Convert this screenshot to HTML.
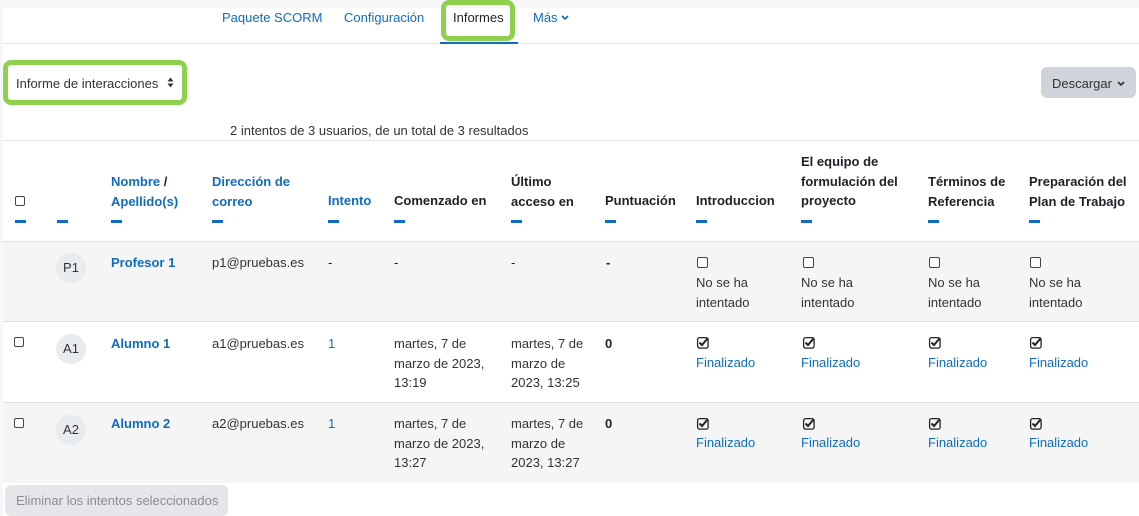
<!DOCTYPE html>
<html><head><meta charset="utf-8"><style>
*{box-sizing:border-box;margin:0;padding:0}
body{width:1139px;height:516px;overflow:hidden;background:#fff;font-family:"Liberation Sans",sans-serif;font-size:13px;color:#1d2125;position:relative}
.a{position:absolute;white-space:nowrap;line-height:19.5px}
.l{color:#0f6cbf}
.b{font-weight:bold}
.dash{position:absolute;width:11px;height:3px;background:#0f6cbf}
.cb{position:absolute;width:10px;height:10px;border:1.3px solid #444;border-radius:2px;background:#fff}
.av{position:absolute;width:30px;height:30px;border-radius:50%;background:#e9ecef;font-size:13px;color:#333;text-align:center;line-height:30px}
.g{color:#333}
</style></head><body>
<div style="position:absolute;left:0;top:0;width:1139px;height:8px;background:#f7f7f7"></div>
<div style="position:absolute;left:0;top:0;width:3px;height:516px;background:#f7f7f7"></div>
<div style="position:absolute;left:3px;top:43px;width:1136px;height:1px;background:#dee2e6"></div>
<div class="a l" style="left:222px;top:8px">Paquete SCORM</div>
<div class="a l" style="left:344px;top:8px">Configuración</div>
<div class="a" style="left:453px;top:8px">Informes</div>
<div class="a l" style="left:533px;top:8px">Más</div>
<svg style="position:absolute;left:561px;top:15px" width="8" height="6"><path d="M1 1 L4 4 L7 1" fill="none" stroke="#0f6cbf" stroke-width="1.6"/></svg>
<div style="position:absolute;left:440px;top:42px;width:78px;height:2px;background:#0f6cbf"></div>
<div style="position:absolute;left:441px;top:0px;width:74px;height:41px;border:5px solid #8fd14f;border-radius:8px"></div>

<div style="position:absolute;left:3px;top:60px;width:184px;height:45px;border:5px solid #8fd14f;border-radius:8px;background:#fff"></div>
<div class="a" style="left:16px;top:74px;color:#333">Informe de interacciones</div>
<svg style="position:absolute;left:167px;top:77px" width="7" height="11"><path d="M0.5 4.5 L3.5 0.5 L6.5 4.5Z M0.5 6.5 L3.5 10.5 L6.5 6.5Z" fill="#333"/></svg>
<div style="position:absolute;left:1041px;top:67px;width:95px;height:31px;background:#ced4da;border-radius:6px"></div>
<div class="a" style="left:1052px;top:74px;color:#333">Descargar</div>
<svg style="position:absolute;left:1117px;top:81px" width="8" height="6"><path d="M1 1 L4 4 L7 1" fill="none" stroke="#333" stroke-width="1.6"/></svg>

<div class="a" style="left:230px;top:121px;color:#333">2 intentos de 3 usuarios, de un total de 3 resultados</div>
<div style="position:absolute;left:3px;top:140px;width:1136px;height:1px;background:#dee2e6"></div>

<div style="position:absolute;left:3px;top:241px;width:1136px;height:80px;background:#f5f5f5;border-top:1px solid #dee2e6"></div>
<div style="position:absolute;left:3px;top:321px;width:1136px;height:81px;background:#fff;border-top:1px solid #dee2e6"></div>
<div style="position:absolute;left:3px;top:402px;width:1136px;height:81px;background:#f5f5f5;border-top:1px solid #dee2e6"></div>

<div class="cb" style="left:15px;top:196px"></div>
<div class="dash" style="left:15px;top:220px"></div>
<div class="dash" style="left:57px;top:220px"></div>
<div class="a l b" style="left:111px;top:172px">Nombre <span style="color:#1d2125">/</span><br>Apellido(s)</div>
<div class="dash" style="left:111px;top:220px"></div>
<div class="a l b" style="left:212px;top:172px">Dirección de<br>correo</div>
<div class="dash" style="left:212px;top:220px"></div>
<div class="a l b" style="left:328px;top:191px">Intento</div>
<div class="dash" style="left:328px;top:220px"></div>
<div class="a b" style="left:394px;top:191px">Comenzado en</div>
<div class="dash" style="left:394px;top:220px"></div>
<div class="a b" style="left:511px;top:172px">Último<br>acceso en</div>
<div class="dash" style="left:511px;top:220px"></div>
<div class="a b" style="left:605px;top:191px">Puntuación</div>
<div class="dash" style="left:605px;top:220px"></div>
<div class="a b" style="left:696px;top:191px">Introduccion</div>
<div class="dash" style="left:696px;top:220px"></div>
<div class="a b" style="left:801px;top:152px">El equipo de<br>formulación del<br>proyecto</div>
<div class="dash" style="left:801px;top:220px"></div>
<div class="a b" style="left:928px;top:172px">Términos de<br>Referencia</div>
<div class="dash" style="left:928px;top:220px"></div>
<div class="a b" style="left:1029px;top:172px">Preparación del<br>Plan de Trabajo</div>
<div class="dash" style="left:1029px;top:220px"></div>

<div class="av" style="left:56px;top:253px">P1</div>
<div class="a l b" style="left:111px;top:253px">Profesor 1</div>
<div class="a g" style="left:212px;top:253px">p1@pruebas.es</div>
<div class="a" style="left:328px;top:253px">-</div>
<div class="a" style="left:394px;top:253px">-</div>
<div class="a" style="left:511px;top:253px">-</div>
<div class="a b" style="left:606px;top:253px">-</div>
<div class="cb" style="left:697px;top:257px;width:11px;height:11px"></div>
<div class="a g" style="left:696px;top:273px">No se ha<br>intentado</div>
<div class="cb" style="left:803px;top:257px;width:11px;height:11px"></div>
<div class="a g" style="left:801px;top:273px">No se ha<br>intentado</div>
<div class="cb" style="left:929px;top:257px;width:11px;height:11px"></div>
<div class="a g" style="left:928px;top:273px">No se ha<br>intentado</div>
<div class="cb" style="left:1030px;top:257px;width:11px;height:11px"></div>
<div class="a g" style="left:1029px;top:273px">No se ha<br>intentado</div>

<div class="cb" style="left:14px;top:337px"></div>
<div class="av" style="left:56px;top:334px">A1</div>
<div class="a l b" style="left:111px;top:334px">Alumno 1</div>
<div class="a g" style="left:212px;top:334px">a1@pruebas.es</div>
<div class="a l" style="left:328px;top:334px">1</div>
<div class="a g" style="left:394px;top:334px">martes, 7 de<br>marzo de 2023,<br>13:19</div>
<div class="a g" style="left:511px;top:334px">martes, 7 de<br>marzo de<br>2023, 13:25</div>
<div class="a b" style="left:605px;top:334px">0</div>

<div class="cb" style="left:14px;top:418px"></div>
<div class="av" style="left:56px;top:415px">A2</div>
<div class="a l b" style="left:111px;top:414px">Alumno 2</div>
<div class="a g" style="left:212px;top:414px">a2@pruebas.es</div>
<div class="a l" style="left:328px;top:414px">1</div>
<div class="a g" style="left:394px;top:414px">martes, 7 de<br>marzo de 2023,<br>13:27</div>
<div class="a g" style="left:511px;top:414px">martes, 7 de<br>marzo de<br>2023, 13:27</div>
<div class="a b" style="left:605px;top:414px">0</div>

<svg style="position:absolute;left:0;top:0" width="1139" height="516">
<defs><g id="ck"><rect x="0.6" y="0.6" width="10.5" height="10.5" rx="2" fill="none" stroke="#222" stroke-width="1.3"/><path d="M2.5 5.5 L5 8 L10.5 1.5" fill="none" stroke="#222" stroke-width="2"/></g></defs>
<use href="#ck" x="697" y="337"/><use href="#ck" x="803" y="337"/><use href="#ck" x="929" y="337"/><use href="#ck" x="1030" y="337"/>
<use href="#ck" x="697" y="418"/><use href="#ck" x="803" y="418"/><use href="#ck" x="929" y="418"/><use href="#ck" x="1030" y="418"/>
</svg>
<div class="a l" style="left:696px;top:353px">Finalizado</div>
<div class="a l" style="left:801px;top:353px">Finalizado</div>
<div class="a l" style="left:928px;top:353px">Finalizado</div>
<div class="a l" style="left:1029px;top:353px">Finalizado</div>
<div class="a l" style="left:696px;top:433px">Finalizado</div>
<div class="a l" style="left:801px;top:433px">Finalizado</div>
<div class="a l" style="left:928px;top:433px">Finalizado</div>
<div class="a l" style="left:1029px;top:433px">Finalizado</div>

<div style="position:absolute;left:5px;top:485px;width:223px;height:31px;background:#e4e6e9;border-radius:6px"></div>
<div class="a" style="left:16px;top:491px;color:#8a8d90">Eliminar los intentos seleccionados</div>
</body></html>
